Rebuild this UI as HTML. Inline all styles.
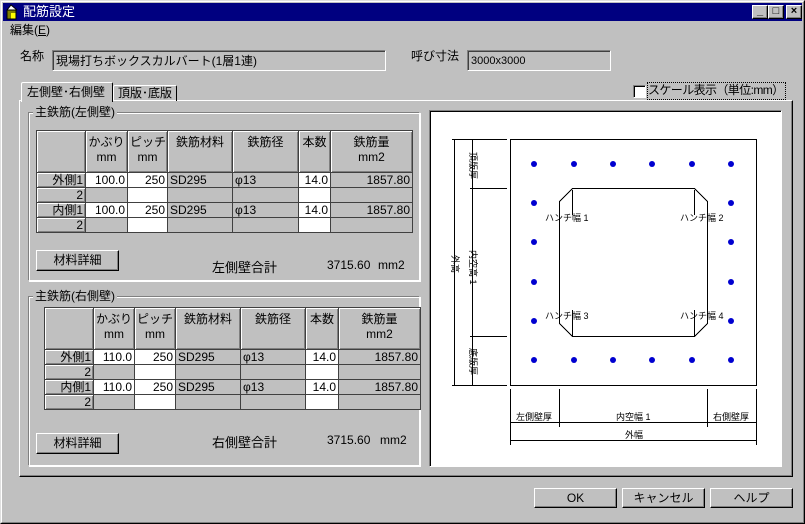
<!DOCTYPE html>
<html><head><meta charset="utf-8">
<style>
*{margin:0;padding:0;box-sizing:border-box}
body{width:805px;height:524px;background:#c0c0c0;font-family:"Liberation Sans","Noto Sans CJK JP",sans-serif;font-size:12px;color:#000;position:relative;overflow:hidden}
.a{position:absolute;white-space:nowrap}
.win{left:0;top:0;width:805px;height:524px;border:1px solid;border-color:#dfdfdf #000 #000 #dfdfdf}
.win2{left:1px;top:1px;width:803px;height:522px;border:1px solid;border-color:#fff #808080 #808080 #fff}
.title{left:3px;top:3px;width:799px;height:18px;background:#000080;color:#fff;font-size:13px;line-height:18px;padding-left:20px}
.tb{top:5px;width:16px;height:14px;background:#c0c0c0;border:1px solid;border-color:#fff #000 #000 #fff;box-shadow:inset -1px -1px #808080;font-size:11px;line-height:11px;text-align:center;font-weight:bold;color:#000}
.sunk{border:1px solid;border-color:#808080 #fff #fff #808080;box-shadow:inset 1px 1px #404040;background:#c0c0c0;padding:2px 0 0 3px;font-size:12px;line-height:16px}
.btn{background:#c0c0c0;border:1px solid;border-color:#fff #000 #000 #fff;box-shadow:inset -1px -1px #808080;text-align:center;line-height:18px}
.grp{border:1px solid;border-color:#808080 #fff #fff #808080;box-shadow:1px 1px #fff, inset 1px 1px #fff}
.gl{background:#c0c0c0;padding:0 2px;font-size:12px;line-height:14px}
table{border-collapse:collapse;position:absolute;table-layout:fixed;border:1px solid #000}
td{border:1px solid #404040;padding:0 2px;font-size:12px;line-height:14px;height:15px;white-space:nowrap;overflow:hidden}
td.h{background:#c0c0c0;border:1px solid #404040;box-shadow:inset 1px 1px #fff,inset -1px -1px #808080;text-align:center;vertical-align:top;padding-top:4px;line-height:15px}
td.r{background:#c0c0c0;box-shadow:inset 1px 1px #fff,inset -1px -1px #808080;text-align:right}
td.w{background:#fff;text-align:right}
td.g{background:#c0c0c0}
td.gr{background:#c0c0c0;text-align:right}
</style></head><body>
<div class="a win"></div><div class="a win2"></div>
<div class="a title">配筋設定</div>
<svg class="a" style="left:5px;top:4px" width="15" height="16"><rect x="2" y="6" width="9" height="9" fill="#808000"/><rect x="6" y="9" width="5" height="6" fill="#ffff00"/><path d="M2 6 L6 1 L12 6" fill="#fff" stroke="#000"/><rect x="2" y="6" width="9" height="9" fill="none" stroke="#000"/></svg>
<div class="a tb" style="left:752px">_</div>
<div class="a tb" style="left:768px">□</div>
<div class="a tb" style="left:786px">×</div>
<div class="a" style="left:10px;top:22px;line-height:16px">編集(<u>E</u>)</div>

<div class="a" style="left:20px;top:48px;line-height:16px">名称</div>
<div class="a sunk" style="left:52px;top:50px;width:334px;height:21px">現場打ちボックスカルバート(1層1連)</div>
<div class="a" style="left:411px;top:48px;line-height:16px">呼び寸法</div>
<div class="a sunk" style="left:467px;top:50px;width:144px;height:21px;font-size:11px">3000x3000</div>

<div class="a" style="left:19px;top:100px;width:774px;height:377px;border:1px solid;border-color:#fff #000 #000 #fff;box-shadow:inset -1px -1px #808080"></div>
<div class="a" style="left:21px;top:82px;width:92px;height:20px;background:#c0c0c0;border:1px solid;border-color:#fff #000 transparent #fff;border-bottom:none;border-radius:2px 2px 0 0;padding:2px 0 0 5px;line-height:15px">左側壁･右側壁</div>
<div class="a" style="left:113px;top:85px;width:64px;height:16px;border:1px solid;border-color:#fff #000 transparent #fff;border-bottom:none;border-radius:2px 2px 0 0;padding:0 0 0 4px;line-height:15px">頂版･底版</div>

<div class="a" style="left:633px;top:85px;width:13px;height:13px;background:#fff;border:1px solid;border-color:#808080 #fff #fff #808080;box-shadow:inset 1px 1px #000"></div>
<div class="a" style="left:648px;top:83px;width:137px;height:16px;outline:1px dotted #000;line-height:15px;font-size:12px;letter-spacing:-0.6px;overflow:hidden">スケール表示（単位:mm）</div>

<div class="a grp" style="left:28px;top:112px;width:392px;height:169px"></div>
<div class="a gl" style="left:33px;top:105px">主鉄筋(左側壁)</div>
<table style="left:36px;top:130px;width:376px">
<colgroup><col style="width:49px"><col style="width:42px"><col style="width:40px"><col style="width:65px"><col style="width:66px"><col style="width:32px"><col style="width:82px"></colgroup>
<tr><td class="h" style="height:42px"></td><td class="h">かぶり<br>mm</td><td class="h">ピッチ<br>mm</td><td class="h">鉄筋材料</td><td class="h">鉄筋径</td><td class="h">本数</td><td class="h">鉄筋量<br>mm2</td></tr>
<tr><td class="r">外側1</td><td class="w">100.0</td><td class="w">250</td><td class="g">SD295</td><td class="g">φ13</td><td class="w">14.0</td><td class="gr">1857.80</td></tr>
<tr><td class="r">2</td><td class="g"></td><td class="w"></td><td class="g"></td><td class="g"></td><td class="w"></td><td class="g"></td></tr>
<tr><td class="r">内側1</td><td class="w">100.0</td><td class="w">250</td><td class="g">SD295</td><td class="g">φ13</td><td class="w">14.0</td><td class="gr">1857.80</td></tr>
<tr><td class="r">2</td><td class="g"></td><td class="w"></td><td class="g"></td><td class="g"></td><td class="w"></td><td class="g"></td></tr>
</table>
<div class="a btn" style="left:36px;top:250px;width:83px;height:21px">材料詳細</div>
<div class="a" style="left:212px;top:257px;font-size:13px">左側壁合計</div>
<div class="a" style="left:327px;top:258px">3715.60</div>
<div class="a" style="left:378px;top:258px">mm2</div>

<div class="a grp" style="left:28px;top:296px;width:392px;height:170px"></div>
<div class="a gl" style="left:33px;top:289px">主鉄筋(右側壁)</div>
<table style="left:44px;top:307px;width:376px">
<colgroup><col style="width:49px"><col style="width:41px"><col style="width:41px"><col style="width:65px"><col style="width:65px"><col style="width:33px"><col style="width:82px"></colgroup>
<tr><td class="h" style="height:42px"></td><td class="h">かぶり<br>mm</td><td class="h">ピッチ<br>mm</td><td class="h">鉄筋材料</td><td class="h">鉄筋径</td><td class="h">本数</td><td class="h">鉄筋量<br>mm2</td></tr>
<tr><td class="r">外側1</td><td class="w">110.0</td><td class="w">250</td><td class="g">SD295</td><td class="g">φ13</td><td class="w">14.0</td><td class="gr">1857.80</td></tr>
<tr><td class="r">2</td><td class="g"></td><td class="w"></td><td class="g"></td><td class="g"></td><td class="w"></td><td class="g"></td></tr>
<tr><td class="r">内側1</td><td class="w">110.0</td><td class="w">250</td><td class="g">SD295</td><td class="g">φ13</td><td class="w">14.0</td><td class="gr">1857.80</td></tr>
<tr><td class="r">2</td><td class="g"></td><td class="w"></td><td class="g"></td><td class="g"></td><td class="w"></td><td class="g"></td></tr>
</table>
<div class="a btn" style="left:36px;top:433px;width:83px;height:21px">材料詳細</div>
<div class="a" style="left:212px;top:432px;font-size:13px">右側壁合計</div>
<div class="a" style="left:327px;top:433px">3715.60</div>
<div class="a" style="left:380px;top:433px">mm2</div>

<div class="a" style="left:429px;top:110px;width:353px;height:357px;background:#fff;border:1px solid;border-color:#808080 #fff #fff #808080;box-shadow:inset 1px 1px #000"></div>
<svg class="a" style="left:0;top:0" width="805" height="524" font-family="Liberation Sans,Noto Sans CJK JP,sans-serif" font-size="9">
<g stroke="#000" stroke-width="1" fill="none" shape-rendering="crispEdges">
<rect x="510.5" y="139.5" width="246" height="246"/>
<path d="M572.5 188.5 H694.5 L707.5 201.5 V323.5 L694.5 336.5 H572.5 L559.5 323.5 V201.5 Z"/>
<path d="M572.5 190 V215 M694.5 190 V215 M572.5 310 V336 M694.5 310 V336"/>
<path d="M452 139.5 H507 M470 188.5 H507 M470 336.5 H507 M452 385.5 H507"/>
<path d="M454.5 140 V385 M472.5 140 V385"/>
<path d="M510.5 389 V445 M559.5 389 V427 M707.5 389 V427 M756.5 389 V445"/>
<path d="M511 422.5 H756 M511 440.5 H756"/>
</g>
<g fill="#0000d0">
<circle cx="534" cy="164" r="3"/><circle cx="574" cy="164" r="3"/><circle cx="613" cy="164" r="3"/><circle cx="652" cy="164" r="3"/><circle cx="692" cy="164" r="3"/><circle cx="731" cy="164" r="3"/>
<circle cx="534" cy="360" r="3"/><circle cx="574" cy="360" r="3"/><circle cx="613" cy="360" r="3"/><circle cx="652" cy="360" r="3"/><circle cx="692" cy="360" r="3"/><circle cx="731" cy="360" r="3"/>
<circle cx="534" cy="203" r="3"/><circle cx="534" cy="242" r="3"/><circle cx="534" cy="282" r="3"/><circle cx="534" cy="321" r="3"/>
<circle cx="731" cy="203" r="3"/><circle cx="731" cy="242" r="3"/><circle cx="731" cy="282" r="3"/><circle cx="731" cy="321" r="3"/>
</g>
<g fill="#000">
<text x="545" y="221">ハンチ幅 1</text><text x="680" y="221">ハンチ幅 2</text>
<text x="545" y="319">ハンチ幅 3</text><text x="680" y="319">ハンチ幅 4</text>
<text x="516" y="420">左側壁厚</text><text x="616" y="420">内空幅 1</text><text x="713" y="420">右側壁厚</text>
<text x="625" y="438">外幅</text>
<text transform="translate(470,152) rotate(90)">頂版厚</text>
<text transform="translate(470,250) rotate(90)">内空高 1</text>
<text transform="translate(470,348) rotate(90)">底版厚</text>
<text transform="translate(452,255) rotate(90)">外高</text>
</g>
</svg>

<div class="a btn" style="left:534px;top:488px;width:83px;height:20px">OK</div>
<div class="a btn" style="left:622px;top:488px;width:83px;height:20px">キャンセル</div>
<div class="a btn" style="left:710px;top:488px;width:83px;height:20px">ヘルプ</div>
</body></html>
